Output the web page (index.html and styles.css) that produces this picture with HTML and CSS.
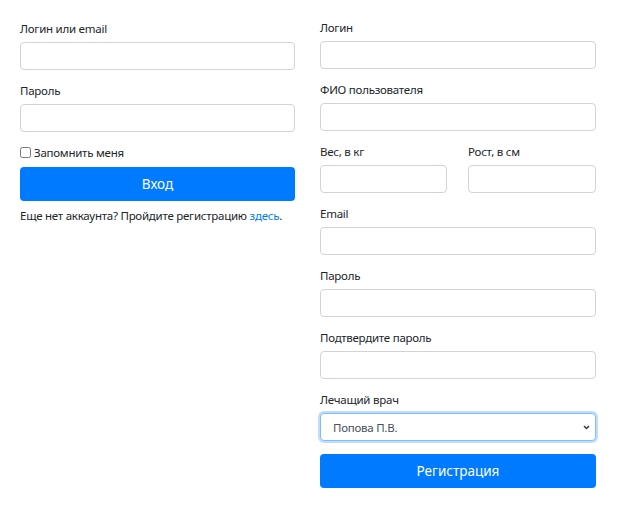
FILE: index.html
```html
<!DOCTYPE html>
<html lang="ru">
<head>
<meta charset="utf-8">
<title>Вход и регистрация</title>
<link rel="stylesheet" href="styles.css">
</head>
<body>
<div class="page">
  <form class="col col-login">
    <div class="group">
      <label class="label">Логин или email</label>
      <input class="field" type="text">
    </div>
    <div class="group">
      <label class="label">Пароль</label>
      <input class="field" type="password">
    </div>
    <label class="check"><input type="checkbox" class="box">Запомнить меня</label>
    <button type="button" class="btn">Вход</button>
    <p class="note">Еще нет аккаунта? Пройдите регистрацию <a href="#" class="link">здесь</a>.</p>
  </form>
  <form class="col col-reg">
    <div class="group">
      <label class="label">Логин</label>
      <input class="field" type="text">
    </div>
    <div class="group">
      <label class="label">ФИО пользователя</label>
      <input class="field" type="text">
    </div>
    <div class="pair">
      <div class="group">
        <label class="label">Вес, в кг</label>
        <input class="field" type="text">
      </div>
      <div class="group">
        <label class="label">Рост, в см</label>
        <input class="field" type="text">
      </div>
    </div>
    <div class="group">
      <label class="label">Email</label>
      <input class="field" type="text">
    </div>
    <div class="group">
      <label class="label">Пароль</label>
      <input class="field" type="password">
    </div>
    <div class="group">
      <label class="label">Подтвердите пароль</label>
      <input class="field" type="password">
    </div>
    <div class="group group-last">
      <label class="label">Лечащий врач</label>
      <div class="select-wrap">
        <select class="field select">
          <option>Попова П.В.</option>
        </select>
        <svg class="chevron" width="7" height="5" viewBox="0 0 7 5"><path d="M1 1 L3.5 3.5 L6 1" fill="none" stroke="#343a40" stroke-width="1.5"/></svg>
      </div>
    </div>
    <button type="button" class="btn">Регистрация</button>
  </form>
</div>
</body>
</html>
```
FILE: styles.css
```css
html, body {
  margin: 0;
  padding: 0;
  background: #fff;
}
body {
  font-family: "Noto Sans", "Open Sans", sans-serif;
  font-size: 11.5px;
  letter-spacing: -0.25px;
  line-height: 19px;
  color: #212529;
}
.page {
  display: grid;
  grid-template-columns: 275px 276px;
  column-gap: 25px;
  padding-left: 20px;
}
.col {
  display: flex;
  flex-direction: column;
  margin: 0;
}
.col-login {
  padding-top: 19px;
}
.col-reg {
  padding-top: 18px;
}
.group {
  display: flex;
  flex-direction: column;
  margin-bottom: 11px;
}
.group-last {
  margin-bottom: 13px;
}
.label {
  display: block;
  margin-bottom: 4px;
  height: 19px;
}
.field {
  box-sizing: border-box;
  height: 28px;
  width: 100%;
  border: 1px solid #ced4da;
  border-radius: 4px;
  background: #fff;
  font-family: inherit;
  font-size: 11.5px;
  letter-spacing: -0.25px;
  color: #495057;
  padding: 0 12px;
  margin: 0;
  outline: none;
}
.pair {
  display: grid;
  grid-template-columns: 127px 128px;
  column-gap: 21px;
}
.select-wrap {
  position: relative;
}
.select {
  appearance: none;
  -webkit-appearance: none;
  border-color: #80bdff;
  box-shadow: 0 0 0 2px rgba(0, 123, 255, 0.25);
}
.chevron {
  position: absolute;
  right: 6px;
  top: 12px;
}
.check {
  display: flex;
  align-items: center;
  height: 19px;
  margin-bottom: 5px;
}
.box {
  width: 11px;
  height: 11px;
  margin: 0 3px 0 0;
}
.btn {
  box-sizing: border-box;
  height: 34px;
  width: 100%;
  border: none;
  border-radius: 4px;
  background: #007bff;
  color: #fff;
  font-family: inherit;
  font-size: 13.5px;
  letter-spacing: 0;
  padding: 0;
}
.note {
  margin: 5px 0 0;
}
.link {
  color: #007bff;
  text-decoration: none;
}
```
